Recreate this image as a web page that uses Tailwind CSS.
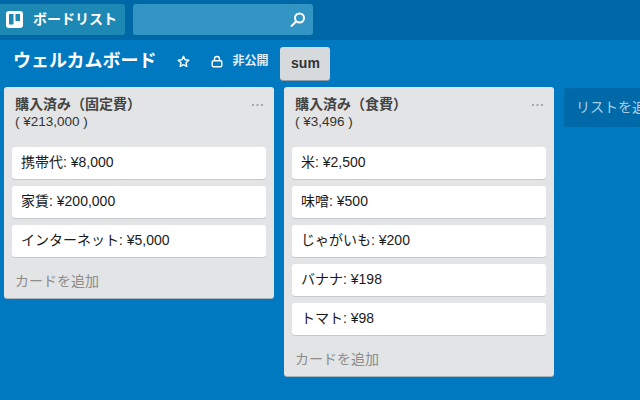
<!DOCTYPE html>
<html lang="ja">
<head>
    <meta charset="UTF-8">
    <title>ウェルカムボード</title>
    <script src="https://cdn.jsdelivr.net/npm/@tailwindcss/browser@4"></script>
</head>
<body class="w-[640px] h-[400px] overflow-hidden bg-[#0079c1] font-['Liberation_Sans','Noto_Sans_CJK_JP',sans-serif] text-[#1a1a1a]">
    <!-- Header -->
    <div class="h-10 bg-[#0068a6] flex items-start pt-[4px] gap-2">
        <div class="w-[125px] h-[31px] rounded-r-[3px] bg-[#1e88b4] flex items-center pl-[6px] text-white">
            <svg width="17" height="17" viewBox="0 0 17 17">
                <rect width="17" height="17" rx="3" fill="#fff"/>
                <rect x="3" y="3" width="4.5" height="10.5" fill="#1e88b4"/>
                <rect x="9.5" y="3" width="4.5" height="7" fill="#1e88b4"/>
            </svg>
            <span class="ml-[10px] text-[14px] font-bold">ボードリスト</span>
        </div>
        <div class="w-[180px] h-[31px] rounded-[3px] bg-[#3295c4] flex items-center justify-end pr-[6px]">
            <svg width="18" height="18" viewBox="0 0 18 18" fill="none" stroke="#fff" stroke-width="2" stroke-linecap="round">
                <circle cx="10.5" cy="7" r="4.5"/>
                <path d="M7 10.5 L2.5 15"/>
            </svg>
        </div>
    </div>

    <!-- Board title row -->
    <div class="h-[47px] flex items-start text-white">
        <h1 class="ml-[13px] mt-[10px] text-[18px] leading-[23px] font-bold">ウェルカムボード</h1>
        <svg class="ml-[21px] mt-[15px]" width="13" height="13" viewBox="0 0 24 24" fill="none" stroke="#fff" stroke-width="2.6" stroke-linejoin="round">
            <path d="M12 2.5 L14.9 8.8 L21.8 9.6 L16.7 14.3 L18.1 21.2 L12 17.7 L5.9 21.2 L7.3 14.3 L2.2 9.6 L9.1 8.8 Z"/>
        </svg>
        <svg class="ml-[21px] mt-[15px]" width="12" height="13" viewBox="0 0 12 13" fill="none" stroke="#fff" stroke-width="1.4">
            <rect x="1.2" y="5.7" width="9.6" height="6" rx="1.2"/>
            <path d="M3.5 5.7 V4 a2.5 2.5 0 0 1 5 0 V5.7"/>
        </svg>
        <span class="ml-[9px] mt-[13px] text-[12px] leading-[16px] font-bold text-[#e4eef5]">非公開</span>
        <div class="ml-[12px] mt-[7px] w-[50px] h-[33px] rounded-[3px] bg-[#d6dadc] shadow-[0_1px_0_#8c9aa3] flex items-center justify-center text-[14px] font-bold text-[#333]">sum</div>
    </div>

    <!-- Lists -->
    <div class="flex items-start gap-[10px] pl-[4px]">
        <div class="w-[270px] shrink-0 rounded-[3px] bg-[#e2e4e6] shadow-[0_1px_0_#a9b4bb]">
            <div class="relative h-[60px] pl-[11px] pt-[8px]">
                <div class="text-[14px] leading-[18px] font-bold text-[#444]">購入済み（固定費）</div>
                <div class="text-[13.5px] leading-[18px] text-[#333]">( ¥213,000 )</div>
                <svg class="absolute right-[11px] top-[17px]" width="11" height="2" viewBox="0 0 11 2" fill="#a8a8a8"><rect width="2" height="2"/><rect x="4.5" width="2" height="2"/><rect x="9" width="2" height="2"/></svg>
            </div>
            <div class="flex flex-col gap-[7px] px-[8px]">
                <div class="h-[32px] rounded-[3px] bg-white shadow-[0_1px_0_#c4c9cc] pl-[9px] text-[14px] leading-[31px]">携帯代: ¥8,000</div>
                <div class="h-[32px] rounded-[3px] bg-white shadow-[0_1px_0_#c4c9cc] pl-[9px] text-[14px] leading-[31px]">家賃: ¥200,000</div>
                <div class="h-[32px] rounded-[3px] bg-white shadow-[0_1px_0_#c4c9cc] pl-[9px] text-[14px] leading-[31px]">インターネット: ¥5,000</div>
            </div>
            <div class="h-[41px] pl-[11px] pt-[8px] text-[14px] leading-[32px] text-[#8c8c8c]">カードを追加</div>
        </div>

        <div class="w-[270px] shrink-0 rounded-[3px] bg-[#e2e4e6] shadow-[0_1px_0_#a9b4bb]">
            <div class="relative h-[60px] pl-[11px] pt-[8px]">
                <div class="text-[14px] leading-[18px] font-bold text-[#444]">購入済み（食費）</div>
                <div class="text-[13.5px] leading-[18px] text-[#333]">( ¥3,496 )</div>
                <svg class="absolute right-[11px] top-[17px]" width="11" height="2" viewBox="0 0 11 2" fill="#a8a8a8"><rect width="2" height="2"/><rect x="4.5" width="2" height="2"/><rect x="9" width="2" height="2"/></svg>
            </div>
            <div class="flex flex-col gap-[7px] px-[8px]">
                <div class="h-[32px] rounded-[3px] bg-white shadow-[0_1px_0_#c4c9cc] pl-[9px] text-[14px] leading-[31px]">米: ¥2,500</div>
                <div class="h-[32px] rounded-[3px] bg-white shadow-[0_1px_0_#c4c9cc] pl-[9px] text-[14px] leading-[31px]">味噌: ¥500</div>
                <div class="h-[32px] rounded-[3px] bg-white shadow-[0_1px_0_#c4c9cc] pl-[9px] text-[14px] leading-[31px]">じゃがいも: ¥200</div>
                <div class="h-[32px] rounded-[3px] bg-white shadow-[0_1px_0_#c4c9cc] pl-[9px] text-[14px] leading-[31px]">バナナ: ¥198</div>
                <div class="h-[32px] rounded-[3px] bg-white shadow-[0_1px_0_#c4c9cc] pl-[9px] text-[14px] leading-[31px]">トマト: ¥98</div>
            </div>
            <div class="h-[41px] pl-[11px] pt-[8px] text-[14px] leading-[32px] text-[#8c8c8c]">カードを追加</div>
        </div>

        <div class="w-[270px] shrink-0 h-[39px] mt-[1px] rounded-[3px] bg-[#006aa8] pl-[12px] text-[14px] leading-[39px] text-[#a9d0e8]">リストを追加...</div>
    </div>
</body>
</html>
